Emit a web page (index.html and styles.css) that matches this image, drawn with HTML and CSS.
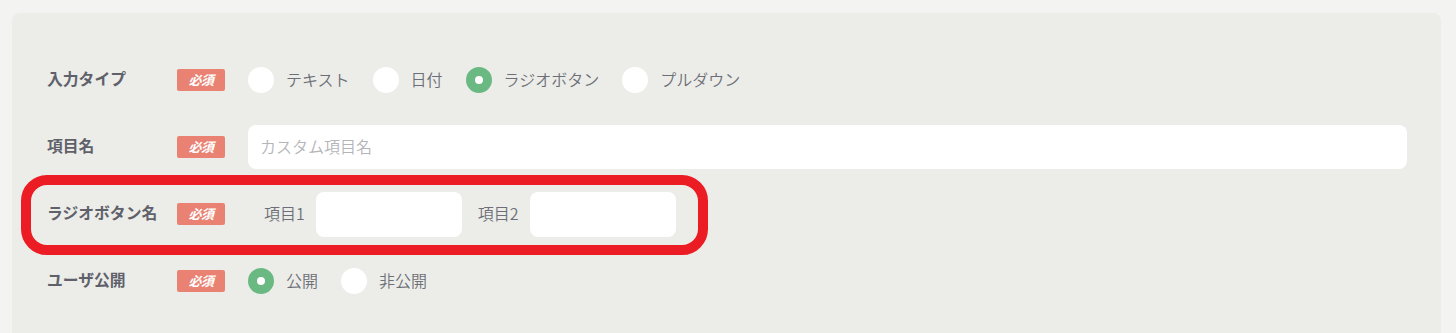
FILE: index.html
```html
<!DOCTYPE html>
<html lang="ja">
<head>
<meta charset="utf-8">
<title>カスタム項目</title>
<link rel="stylesheet" href="styles.css">
</head>
<body>
<div class="card">
  <div class="rows">
    <div class="row">
      <div class="label">入力タイプ</div>
      <span class="badge">必須</span>
      <div class="options">
        <label class="opt"><span class="radio"></span><span class="opt-text">テキスト</span></label>
        <label class="opt"><span class="radio"></span><span class="opt-text">日付</span></label>
        <label class="opt"><span class="radio checked"></span><span class="opt-text">ラジオボタン</span></label>
        <label class="opt"><span class="radio"></span><span class="opt-text">プルダウン</span></label>
      </div>
    </div>
    <div class="row">
      <div class="label">項目名</div>
      <span class="badge">必須</span>
      <div class="field wide"><span class="placeholder">カスタム項目名</span></div>
    </div>
    <div class="row">
      <div class="label">ラジオボタン名</div>
      <span class="badge">必須</span>
      <div class="items">
        <div class="item"><span class="item-text">項目1</span><div class="field small"></div></div>
        <div class="item"><span class="item-text">項目2</span><div class="field small"></div></div>
      </div>
    </div>
    <div class="row">
      <div class="label">ユーザ公開</div>
      <span class="badge">必須</span>
      <div class="options">
        <label class="opt"><span class="radio checked"></span><span class="opt-text">公開</span></label>
        <label class="opt"><span class="radio"></span><span class="opt-text">非公開</span></label>
      </div>
    </div>
  </div>
  <div class="highlight"></div>
</div>
</body>
</html>
```
FILE: styles.css
```css
html, body {
  margin: 0;
  padding: 0;
  background: #f3f4f2;
  height: 100%;
  overflow: hidden;
}
body {
  font-family: "Noto Sans CJK JP", "Noto Sans", sans-serif;
}
.card {
  position: relative;
  margin: 13px 15px 0 12px;
  background: #ecede8;
  border-radius: 8px;
  padding: 45px 34px 40px 35px;
  min-height: 320px;
  box-sizing: border-box;
}
.rows {
  display: flex;
  flex-direction: column;
  gap: 23px;
}
.row {
  display: flex;
  align-items: center;
  height: 44px;
}
.label {
  width: 130px;
  flex: none;
  font-size: 15.8px;
  font-weight: 700;
  color: #5f616a;
  line-height: 1;
  margin-top: -2px;
}
.badge {
  flex: none;
  width: 48px;
  height: 22px;
  border-radius: 2px;
  background: #e98272;
  color: #fff;
  font-size: 13px;
  font-weight: 700;
  font-style: italic;
  line-height: 22px;
  text-align: center;
  margin-right: 23px;
  letter-spacing: -0.5px;
}
.options {
  display: flex;
  align-items: center;
  gap: 23px;
}
.opt {
  display: flex;
  align-items: center;
  gap: 12px;
}
.radio {
  width: 26px;
  height: 26px;
  border-radius: 50%;
  background: #fff;
  box-sizing: border-box;
  flex: none;
}
.radio.checked {
  background: #fff;
  border: 9px solid #6bb982;
}
.opt-text, .item-text {
  font-size: 16px;
  font-weight: 350;
  color: #6c6f77;
  line-height: 1;
  margin-top: -2px;
}
.field {
  background: #fff;
  border-radius: 8px;
  height: 44px;
  box-sizing: border-box;
  display: flex;
  align-items: center;
}
.field.wide {
  flex: 1;
  padding-left: 12px;
}
.placeholder {
  font-size: 16px;
  font-weight: 350;
  color: #b4b5b9;
  line-height: 1;
  margin-top: -2px;
}
.items {
  display: flex;
  align-items: center;
  gap: 16px;
  margin-left: 16px;
}
.item {
  display: flex;
  align-items: center;
  gap: 11px;
}
.field.small {
  width: 146px;
  height: 45px;
}
.highlight {
  position: absolute;
  left: 9px;
  top: 162px;
  width: 687px;
  height: 80px;
  box-sizing: border-box;
  border: 10px solid #ec1c24;
  border-radius: 26px;
  pointer-events: none;
}
```
